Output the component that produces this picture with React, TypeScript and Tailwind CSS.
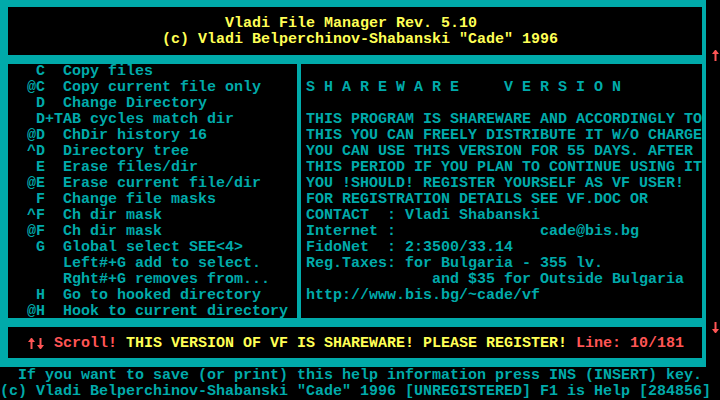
const helpKeys = [
  ' C  Copy files',
  '@C  Copy current file only',
  ' D  Change Directory',
  ' D+TAB cycles match dir',
  '@D  ChDir history 16',
  '^D  Directory tree',
  ' E  Erase files/dir',
  '@E  Erase current file/dir',
  ' F  Change file masks',
  '^F  Ch dir mask',
  '@F  Ch dir mask',
  ' G  Global select SEE<4>',
  '    Left#+G add to select.',
  '    Rght#+G removes from...',
  ' H  Go to hooked directory',
  '@H  Hook to current directory',
];

const sharewareText = [
  'S H A R E W A R E     V E R S I O N',
  '',
  'THIS PROGRAM IS SHAREWARE AND ACCORDINGLY TO',
  'THIS YOU CAN FREELY DISTRIBUTE IT W/O CHARGE',
  'YOU CAN USE THIS VERSION FOR 55 DAYS. AFTER',
  'THIS PERIOD IF YOU PLAN TO CONTINUE USING IT',
  'YOU !SHOULD! REGISTER YOURSELF AS VF USER!',
  'FOR REGISTRATION DETAILS SEE VF.DOC OR',
  'CONTACT  : Vladi Shabanski',
  'Internet :                cade@bis.bg',
  'FidoNet  : 2:3500/33.14',
  'Reg.Taxes: for Bulgaria - 355 lv.',
  '              and $35 for Outside Bulgaria',
  'http://www.bis.bg/~cade/vf',
];

// VGA-style arrow glyph, one 9x16 character cell
const Arrow = ({ down = false }: { down?: boolean }) => (
  <svg width="9" height="16" viewBox="0 0 9 16" className="block shrink-0" fill="#ff5555">
    <g transform={down ? 'rotate(180 4.5 7.5)' : undefined}>
      <polygon points="4,2 5,2 8,6 1,6" />
      <rect x="3.5" y="6" width="2" height="7" />
    </g>
  </svg>
);

const App = () => {
  return (
    <div className="w-[720px] h-[400px] bg-black overflow-hidden font-['Liberation_Mono','DejaVu_Sans_Mono',monospace] font-bold text-[15px] leading-[16px] text-[#00aaaa] whitespace-pre">
      <div className="flex">
        {/* main window frame */}
        <div className="w-[706px] h-[367px] bg-[#00aaaa] pt-[7px] pl-[8px] pr-[4px] pb-[9px] flex flex-col gap-[9px]">
          <div className="h-[48px] bg-black pt-[9px] text-[#ffff55]">
            <div className="pl-[217px]">Vladi File Manager Rev. 5.10</div>
            <div className="pl-[154px]">(c) Vladi Belperchinov-Shabanski "Cade" 1996</div>
          </div>

          <div className="h-[254px] flex gap-[4px]">
            <div className="w-[289px] bg-black pl-[19px]">
              {helpKeys.map((line, i) => (
                <div key={i}>{line}</div>
              ))}
            </div>
            <div className="flex-1 bg-black pt-[16px] pl-[5px]">
              {sharewareText.map((line, i) => (
                <div key={i} className="h-[16px]">{line}</div>
              ))}
            </div>
          </div>

          <div className="h-[31px] bg-black pt-[9px] pl-[19px] flex">
            <Arrow />
            <Arrow down />
            <span className="text-[#ff5555]"> Scroll!</span>
            <span className="text-[#ffff55]"> THIS VERSION OF VF IS SHAREWARE! PLEASE REGISTER! </span>
            <span className="text-[#ff5555]">Line: 10/181</span>
          </div>
        </div>

        {/* scroll markers */}
        <div className="flex-1 pl-[5px]">
          <div className="mt-[48px]">
            <Arrow />
          </div>
          <div className="mt-[256px]">
            <Arrow down />
          </div>
        </div>
      </div>

      <div className="pt-[1px]">
        <div>{'  If you want to save (or print) this help information press INS (INSERT) key.'}</div>
        <div>{'(c) Vladi Belperchinov-Shabanski "Cade" 1996 [UNREGISTERED] F1 is Help [284856]'}</div>
      </div>
    </div>
  );
};

export default App;
